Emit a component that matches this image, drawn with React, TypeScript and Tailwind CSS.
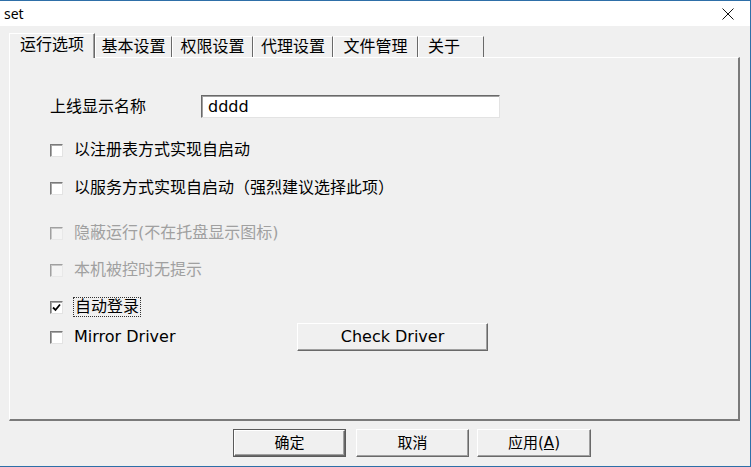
import React from "react";

const FONT = "font-['DejaVu_Sans','Noto_Sans_CJK_SC',sans-serif]";

function Box({ checked, disabled }: { checked?: boolean; disabled?: boolean }) {
  return (
    <span
      className={
        disabled
          ? "w-[13px] h-[13px] shrink-0 border border-t-[#a0a0a0] border-l-[#a0a0a0] border-r-[#e8e8e8] border-b-[#e8e8e8] bg-[#f4f4f4] shadow-[inset_1px_1px_0_#c8c8c8] flex items-center justify-center"
          : "w-[13px] h-[13px] shrink-0 border border-t-[#7a7a7a] border-l-[#7a7a7a] border-r-[#e3e3e3] border-b-[#e3e3e3] bg-white shadow-[inset_1px_1px_0_#a8a8a8] flex items-center justify-center"
      }
    >
      {checked && (
        <svg width="9" height="9" viewBox="0 0 9 9">
          <path d="M1 4.5 L3.5 7 L8 1.5" stroke="#000" strokeWidth="1.8" fill="none" />
        </svg>
      )}
    </span>
  );
}

function CheckRow({
  label,
  checked,
  disabled,
  focus,
  className,
}: {
  label: string;
  checked?: boolean;
  disabled?: boolean;
  focus?: boolean;
  className: string;
}) {
  return (
    <div className={className}>
      <Box checked={checked} disabled={disabled} />
      {focus ? (
        <span className="ml-[10px] px-[1px] border border-dotted border-[#333] leading-[18px] text-[16px] text-black">
          {label}
        </span>
      ) : (
        <span
          className={
            disabled
              ? "ml-[11px] leading-[20px] text-[16px] text-[#a0a0a0]"
              : "ml-[11px] leading-[20px] text-[16px] text-black"
          }
        >
          {label}
        </span>
      )}
    </div>
  );
}

function Btn({ label, className, def }: { label: React.ReactNode; className: string; def?: boolean }) {
  return (
    <div className={className}>
      <div
        className={
          def
            ? "w-full h-full border border-[#5a5a5a] flex"
            : "w-full h-full flex"
        }
      >
        <div className="flex-1 border border-t-white border-l-white border-r-[#696969] border-b-[#696969] shadow-[inset_-1px_-1px_0_#a0a0a0] bg-[#f0f0f0] flex items-center justify-center text-[15px] text-black leading-none">
          {label}
        </div>
      </div>
    </div>
  );
}

export default function App() {
  const tabs = [
    { t: "基本设置", w: "w-[77px] h-[21px] justify-center" },
    { t: "权限设置", w: "w-[81px] h-[21px] justify-center" },
    { t: "代理设置", w: "w-[80px] h-[21px] justify-center" },
    { t: "文件管理", w: "w-[85px] h-[21px] justify-center" },
    { t: "关于", w: "w-[66px] h-[21px] justify-start pl-[9px]" },
  ];
  return (
    <div className={`w-[751px] h-[467px] bg-[#f0f0f0] border-t border-r border-b border-[#2e6fa8] flex flex-col ${FONT}`}>
      {/* title bar */}
      <div className="h-[25px] bg-white flex items-center justify-between pl-[4px] pr-[16px] shrink-0">
        <span className="font-['Noto_Sans',sans-serif] text-[14px] text-black leading-none">set</span>
        <svg width="12" height="12" viewBox="0 0 12 12">
          <path d="M0.5 0.5 L11.5 11.5 M11.5 0.5 L0.5 11.5" stroke="#111" strokeWidth="1" fill="none" />
        </svg>
      </div>

      <div className="flex flex-col pl-[9px] pt-[7px]">
        {/* tabs */}
        <div className="flex items-end h-[24px] relative z-10">
          <div className="w-[86px] h-[25px] -mb-[1px] bg-[#f0f0f0] border-l border-t border-white border-r border-r-[#696969] shadow-[inset_-1px_0_0_#a0a0a0] flex items-center justify-center text-[16px] text-black pb-[2px]">
            运行选项
          </div>
          {tabs.map((x) => (
            <div
              key={x.t}
              className={`${x.w} border-l border-t border-white border-r border-r-[#696969] flex items-center text-[16px] text-black`}
            >
              {x.t}
            </div>
          ))}
        </div>

        {/* panel */}
        <div className="w-[731px] h-[364px] border-t border-l border-white border-r-2 border-b-2 border-r-[#7a7a7a] border-b-[#7a7a7a] flex flex-col pl-[40px] pt-[37px]">
          <div className="h-[23px] flex items-center">
            <span className="w-[151px] text-[16px] text-black leading-none">上线显示名称</span>
            <div className="w-[299px] h-[23px] bg-white border border-t-[#696969] border-l-[#696969] border-r-[#e3e3e3] border-b-[#e3e3e3] shadow-[inset_1px_1px_0_#a0a0a0] flex items-center pl-[6px] text-[16px] text-black">
              dddd
            </div>
          </div>
          <CheckRow className="h-[20px] flex items-center mt-[22px]" label="以注册表方式实现自启动" />
          <CheckRow className="h-[20px] flex items-center mt-[18px]" label="以服务方式实现自启动（强烈建议选择此项）" />
          <CheckRow className="h-[20px] flex items-center mt-[25px]" label="隐蔽运行(不在托盘显示图标)" disabled />
          <CheckRow className="h-[20px] flex items-center mt-[17px]" label="本机被控时无提示" disabled />
          <CheckRow className="h-[20px] flex items-center mt-[17px]" label="自动登录" checked focus />
          <div className="h-[28px] flex items-center mt-[6px]">
            <div className="w-[247px] flex items-center">
              <Box />
              <span className="ml-[11px] text-[16px] text-black leading-none">Mirror Driver</span>
            </div>
            <div className="w-[191px] h-[28px] border border-t-white border-l-white border-r-[#696969] border-b-[#696969] shadow-[inset_-1px_-1px_0_#a0a0a0] flex items-center justify-center text-[16px] text-black leading-none">
              Check Driver
            </div>
          </div>
        </div>
      </div>

      {/* bottom buttons */}
      <div className="flex pl-[233px] mt-[8px]">
        <Btn className="w-[113px] h-[28px]" label="确定" def />
        <Btn className="w-[113px] h-[28px] ml-[10px]" label="取消" />
        <Btn
          className="w-[114px] h-[28px] ml-[8px]"
          label={
            <span>
              应用(<span className="underline">A</span>)
            </span>
          }
        />
      </div>
    </div>
  );
}
